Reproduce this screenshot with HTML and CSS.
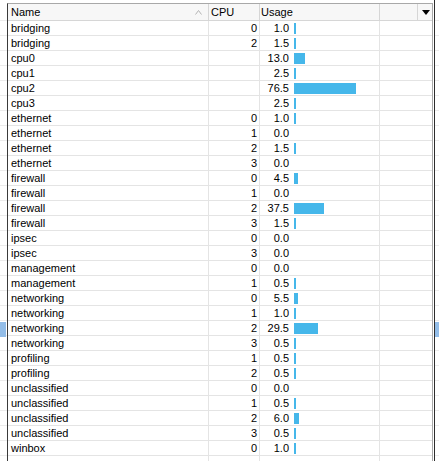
FILE: index.html
```html
<!DOCTYPE html>
<html lang="en">
<head>
    <meta charset="UTF-8">
    <meta name="viewport" content="width=device-width, initial-scale=1.0">
    <title>Profile</title>
    <link rel="stylesheet" href="styles.css">
</head>
<body>
    <div class="screen">
        <div class="side side-left"><div class="side-mark"></div></div>
        <div class="frame">
            <div class="panel">
                <div class="head">
                    <div class="col col-name">Name
                        <svg class="sort-arrow" width="7" height="5" viewBox="0 0 7 5"><path d="M0.5 4.5 L3.5 0.5 L6.5 4.5" fill="none" stroke="#b4b4b4" stroke-width="1"/></svg>
                    </div>
                    <div class="col col-cpu">CPU</div>
                    <div class="col col-usage">Usage</div>
                    <div class="col col-rest"></div>
                    <div class="col col-menu">
                        <svg width="8" height="5" viewBox="0 0 8 5"><path d="M0 0 H8 L4 5 Z" fill="#000"/></svg>
                    </div>
                </div>
                <div class="rows" id="rows"></div>
            </div>
        </div>
        <div class="side side-right"><div class="side-mark"></div></div>
    </div>

    <script>
        // name, cpu, usage
        const tasks = [
            ['bridging', '0', 1.0],
            ['bridging', '2', 1.5],
            ['cpu0', '', 13.0],
            ['cpu1', '', 2.5],
            ['cpu2', '', 76.5],
            ['cpu3', '', 2.5],
            ['ethernet', '0', 1.0],
            ['ethernet', '1', 0.0],
            ['ethernet', '2', 1.5],
            ['ethernet', '3', 0.0],
            ['firewall', '0', 4.5],
            ['firewall', '1', 0.0],
            ['firewall', '2', 37.5],
            ['firewall', '3', 1.5],
            ['ipsec', '0', 0.0],
            ['ipsec', '3', 0.0],
            ['management', '0', 0.0],
            ['management', '1', 0.5],
            ['networking', '0', 5.5],
            ['networking', '1', 1.0],
            ['networking', '2', 29.5],
            ['networking', '3', 0.5],
            ['profiling', '1', 0.5],
            ['profiling', '2', 0.5],
            ['unclassified', '0', 0.0],
            ['unclassified', '1', 0.5],
            ['unclassified', '2', 6.0],
            ['unclassified', '3', 0.5],
            ['winbox', '0', 1.0]
        ];

        const rowsEl = document.getElementById('rows');

        tasks.forEach(([name, cpu, usage]) => {
            const row = document.createElement('div');
            row.className = 'row';
            let bar = '';
            if (usage > 0) {
                const w = Math.max(2, Math.round(usage * 0.81));
                bar = `<span class="bar" style="width: ${w}px"></span>`;
            }
            row.innerHTML = `
                <div class="col col-name">${name}</div>
                <div class="col col-cpu">${cpu}</div>
                <div class="col col-usage"><span class="usage-val">${usage.toFixed(1)}</span>${bar}</div>
                <div class="col col-fill"></div>
            `;
            rowsEl.appendChild(row);
        });

        // empty area under the last row keeps the column lines
        const filler = document.createElement('div');
        filler.className = 'row row-filler';
        filler.innerHTML = `
            <div class="col col-name"></div>
            <div class="col col-cpu"></div>
            <div class="col col-usage"></div>
            <div class="col col-fill"></div>
        `;
        rowsEl.appendChild(filler);
    </script>
</body>
</html>
```

FILE: styles.css
```css
body {
    margin: 0;
    background-color: #ffffff;
    font-family: "Liberation Sans", Arial, sans-serif;
    font-size: 11px;
    color: #000000;
}
.screen {
    display: flex;
    height: 461px;
    overflow: hidden;
}
.side {
    background-image: repeating-linear-gradient(to bottom, transparent 0, transparent 14px, #ececec 14px, #ececec 15px);
    background-position: 0 6px;
}
.side-left {
    width: 7px;
}
.side-right {
    width: 4px;
}
.side-mark {
    margin-top: 322px;
    height: 15px;
    background-color: #93bde8;
}
.side-left .side-mark {
    width: 6px;
}
.frame {
    display: flex;
    border-right: 1px solid #2c2c2c;
    padding-right: 1px;
}
.panel {
    width: 424px;
    margin-top: 3px;
    border-top: 1px solid #a8a8a8;
    border-left: 1px solid #3a3a3a;
    border-right: 1px solid #a8a8a8;
    display: flex;
    flex-direction: column;
    background-color: #ffffff;
}
.head {
    display: flex;
    height: 16px;
    border-bottom: 1px solid #d6d6d6;
    background-color: #f7f7f7;
}
.head .col {
    border-right: 1px solid #d6d6d6;
}
.col {
    display: flex;
    align-items: center;
    box-sizing: border-box;
    border-right: 1px solid #e4e4e4;
    white-space: nowrap;
}
.col-name {
    width: 201px;
    padding-left: 3px;
    position: relative;
}
.col-cpu {
    width: 51px;
}
.head .col-cpu {
    padding-left: 2px;
}
.row .col-cpu {
    justify-content: flex-end;
    padding-right: 2px;
}
.col-usage {
    width: 120px;
    padding-left: 1px;
}
.col-rest {
    width: 38px;
}
.head .col-menu {
    flex: 1;
    border-right: none;
    justify-content: center;
    padding-left: 1px;
}
.col-fill {
    flex: 1;
    border-right: none;
}
.sort-arrow {
    position: absolute;
    right: 6px;
    top: 6px;
}
.rows {
    flex: 1;
    display: flex;
    flex-direction: column;
}
.row {
    display: flex;
    height: 15px;
    box-sizing: border-box;
    border-bottom: 1px solid #e4e4e4;
}
.row-filler {
    flex: 1;
    border-bottom: none;
}
.usage-val {
    width: 28px;
    text-align: right;
}
.bar {
    height: 11px;
    margin-left: 5px;
    background-color: #45b7ea;
}
```
